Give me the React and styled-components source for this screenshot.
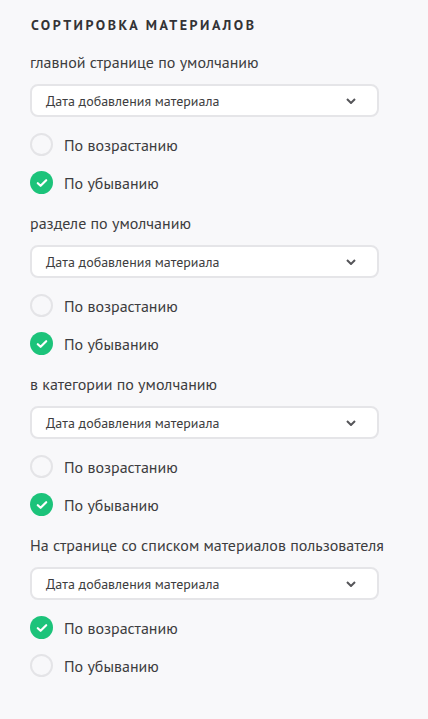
import React, { useState } from "react";
import styled, { createGlobalStyle } from "styled-components";

const GlobalStyle = createGlobalStyle`
  html, body {
    margin: 0;
    padding: 0;
    background: #f8f8fa;
  }
  body {
    font-family: "PT Sans", "Noto Sans", "Open Sans", sans-serif;
    color: #3d3d40;
  }
`;

const Panel = styled.div`
  width: 428px;
  min-height: 719px;
  box-sizing: border-box;
  padding: 16px 30px 20px 30px;
  background: #f8f8fa;
`;

const Title = styled.h3`
  margin: 0 0 0 1px;
  font-size: 14px;
  line-height: 18px;
  font-weight: 700;
  letter-spacing: 2.5px;
  text-transform: uppercase;
  color: #333336;
`;

const Group = styled.div`
  display: flex;
  flex-direction: column;
  margin-top: ${(p) => (p.first ? "18px" : "19px")};
`;

const Label = styled.div`
  font-size: 16px;
  line-height: 20px;
  color: #3d3d40;
  margin-bottom: 12px;
`;

const Select = styled.div`
  width: 349px;
  height: 33px;
  box-sizing: border-box;
  display: flex;
  align-items: center;
  justify-content: space-between;
  padding: 0 21px 0 14px;
  background: #fff;
  border: 2px solid #e5e5e8;
  border-radius: 8px;
  font-size: 14px;
  color: #3d3d40;
  margin-bottom: 16px;
`;

const Options = styled.div`
  display: flex;
  flex-direction: column;
  gap: 15px;
`;

const Option = styled.label`
  display: flex;
  align-items: center;
  gap: 11px;
  height: 23px;
  font-size: 16px;
  color: #3d3d40;
  cursor: pointer;
`;

const Circle = styled.span`
  width: 23px;
  height: 23px;
  flex: none;
  box-sizing: border-box;
  border-radius: 50%;
  display: flex;
  align-items: center;
  justify-content: center;
  background: ${(p) => (p.checked ? "#1cc37a" : "transparent")};
  border: ${(p) => (p.checked ? "none" : "2px solid #e4e4e7")};
`;

const Chevron = () => (
  <svg width="10" height="6" viewBox="0 0 10 6">
    <path d="M1 1 L5 5 L9 1" fill="none" stroke="#555559" strokeWidth="2" />
  </svg>
);

const Check = () => (
  <svg width="12" height="10" viewBox="0 0 12 10">
    <path d="M1.8 5.2 L4.6 7.8 L10.2 2.2" fill="none" stroke="#fff" strokeWidth="2.2" strokeLinecap="round" strokeLinejoin="round" />
  </svg>
);

const groups = [
  { label: "главной странице по умолчанию", desc: true },
  { label: "разделе по умолчанию", desc: true },
  { label: "в категории по умолчанию", desc: true },
  { label: "На странице со списком материалов пользователя", desc: false },
];

const SortGroup = ({ label, initialDesc, first }) => {
  const [desc, setDesc] = useState(initialDesc);
  return (
    <Group first={first}>
      <Label>{label}</Label>
      <Select>
        <span>Дата добавления материала</span>
        <Chevron />
      </Select>
      <Options>
        <Option onClick={() => setDesc(false)}>
          <Circle checked={!desc}>{!desc && <Check />}</Circle>
          По возрастанию
        </Option>
        <Option onClick={() => setDesc(true)}>
          <Circle checked={desc}>{desc && <Check />}</Circle>
          По убыванию
        </Option>
      </Options>
    </Group>
  );
};

export default function App() {
  return (
    <>
      <GlobalStyle />
      <Panel>
        <Title>Сортировка материалов</Title>
        {groups.map((g, i) => (
          <SortGroup key={i} label={g.label} initialDesc={g.desc} first={i === 0} />
        ))}
      </Panel>
    </>
  );
}
